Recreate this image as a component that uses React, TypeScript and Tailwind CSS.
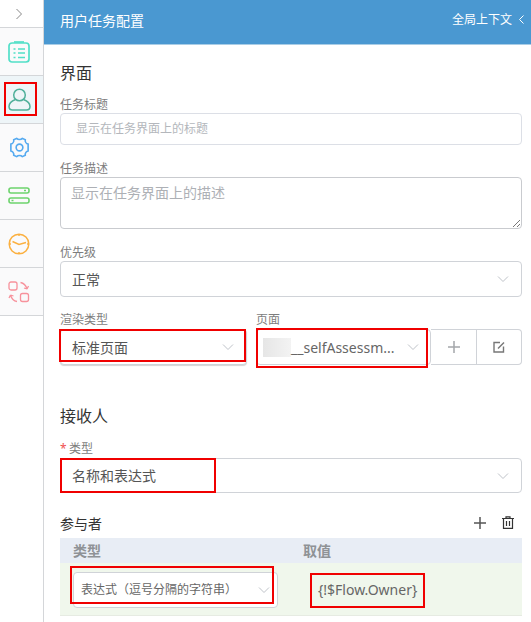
const font = "font-['Noto_Sans','Noto_Sans_CJK_SC',sans-serif]";

const Chevron = () => (
  <svg width="14" height="8" viewBox="0 0 14 8" fill="none" stroke="#bfc3c9" strokeWidth="1" className="shrink-0">
    <path d="M2 1.500 7 6.500 12 1.500" />
  </svg>
);

const ListIcon = () => (
  <svg width="22" height="22" viewBox="0 0 22 22" fill="none" stroke="#52dfc8" strokeWidth="1.7">
    <rect x="1" y="2" width="20" height="19" rx="3" />
    <path d="M6 1h10" />
    <path d="M5.500 8h2M10 8h7M5.500 12h2M10 12h7M5.500 16.500h2M10 16.500h7" />
  </svg>
);

const UserIcon = () => (
  <svg width="23" height="23" viewBox="0 0 23 23" fill="none" stroke="#4fb09a" strokeWidth="1.5">
    <circle cx="11.500" cy="7" r="5.800" />
    <path d="M7.500 11.500C3.500 13 1 15.500 1 18.500c0 2.200 1.500 3.500 3.500 3.500h14c2 0 3.500-1.300 3.500-3.500 0-3-2.500-5.500-6.500-7" />
  </svg>
);

const GearIcon = () => (
  <svg width="23" height="23" viewBox="0 0 24 24" fill="none" stroke="#55aaf0" strokeWidth="1.7">
    <path d="M9 2.500c1.500 1.500 4.500 1.500 6 0l3 1.500c-.3 2 1.200 4 3 4.500v7c-1.800.5-3.300 2.500-3 4.500l-3 1.500c-1.500-1.500-4.500-1.500-6 0l-3-1.500c.3-2-1.200-4-3-4.500v-7c1.800-.5 3.300-2.500 3-4.500z" />
    <circle cx="12" cy="12" r="3.500" />
  </svg>
);

const ServerIcon = () => (
  <svg width="22" height="17" viewBox="0 0 22 17" fill="none" stroke="#6dd36d" strokeWidth="1.6">
    <rect x="1" y="1" width="20" height="5" rx="2" />
    <rect x="1" y="11" width="20" height="5" rx="2" />
    <path d="M16 3.500h2M3.500 13.500h2" />
  </svg>
);

const ClockIcon = () => (
  <svg width="22" height="22" viewBox="0 0 22 22" fill="none" stroke="#fbb040" strokeWidth="1.5">
    <circle cx="11" cy="11" r="9.800" />
    <path d="M11 1v2M11 19v2M1 11h2M19 11h2" />
    <path d="M4.500 8.500 11 11.500 18 9.500" />
  </svg>
);

const SwapIcon = () => (
  <svg width="22" height="22" viewBox="0 0 22 22" fill="none" stroke="#f7929c" strokeWidth="1.3">
    <rect x="1" y="1" width="8" height="8" rx="2" />
    <rect x="12.500" y="12.500" width="8" height="8" rx="2" />
    <path d="M12.500 1.500c3 .5 5.500 3 6.500 6.500M19 8l-3-1M19 8l1.500-3" />
    <path d="M9 20.500c-3-.5-5.500-3-6.500-6.500M2.500 14l-1.500 3M2.500 14l3 1" />
  </svg>
);

const RailItem = ({ children, active }: { children: React.ReactNode; active?: boolean }) => (
  <div className={`relative h-[48px] pr-[5px] flex items-center justify-center border-b border-[#d4d6d9] ${active ? "bg-[#eef5f8]" : "bg-[#fafafb]"}`}>
    {children}
    {active && <div className="absolute left-[4px] top-[6px] w-[33px] h-[34px] border-[2px] border-[#f00000]" />}
  </div>
);

const Rail = () => (
  <aside className="w-[44px] shrink-0 border-r border-[#d4d6d9] h-[622px] bg-white">
    <div className="h-[28px] pr-[5px] flex items-center justify-center border-b border-[#d4d6d9]">
      <svg width="8" height="12" viewBox="0 0 8 12" fill="none" stroke="#888" strokeWidth="1">
        <path d="M1.500 1 6.500 6 1.500 11" />
      </svg>
    </div>
    <RailItem><ListIcon /></RailItem>
    <RailItem active><UserIcon /></RailItem>
    <RailItem><GearIcon /></RailItem>
    <RailItem><ServerIcon /></RailItem>
    <RailItem><ClockIcon /></RailItem>
    <RailItem><SwapIcon /></RailItem>
  </aside>
);

const Label = ({ text, className = "" }: { text: string; className?: string }) => (
  <div className={`text-[12px] leading-[16px] text-[#7d7d7d] ${className}`}>{text}</div>
);

const Select = ({ value, className = "" }: { value: React.ReactNode; className?: string }) => (
  <div className={`flex items-center justify-between pl-[11px] pr-[11px] border border-[#d0d3d8] rounded-[4px] text-[14px] text-[#555] bg-white ${className}`}>
    <span>{value}</span>
    <Chevron />
  </div>
);

const RedBox = ({ className }: { className: string }) => (
  <div className={`absolute border-[2px] border-[#f00000] pointer-events-none ${className}`} />
);

const App = () => {
  return (
    <div className={`${font} flex w-[531px] h-[622px] overflow-hidden bg-white`}>
      <Rail />
      <main className="flex-1 min-w-0">
        <header className="h-[45px] pb-[4px] bg-[#4a98d1] border-b border-[#a9cde6] flex items-center justify-between pl-[16px] pr-[7px] text-white">
          <span className="text-[14px]">用户任务配置</span>
          <span className="flex items-center gap-[7px] text-[12px]">
            全局上下文
            <svg width="5" height="9" viewBox="0 0 5 9" fill="none" stroke="#fff" strokeWidth="1" className="mb-[2px]">
              <path d="M4.500 .5 .5 4.500 4.500 8.500" />
            </svg>
          </span>
        </header>

        <div className="pl-[16px] pr-[9px]">
          <h2 className="mt-[16px] text-[16px] leading-[24px] text-[#333] font-normal">界面</h2>

          <Label text="任务标题" className="mt-[12px]" />
          <div className="h-[32px] flex items-center pl-[15px] border border-[#dcdfe6] rounded-[4px] text-[12px] text-[#b4b7bc]">
            显示在任务界面上的标题
          </div>

          <Label text="任务描述" className="mt-[16px]" />
          <div className="relative h-[52px] pl-[10px] pt-[5px] border border-[#c9cbcf] rounded-[4px] text-[14px] leading-[20px] text-[#adb0b5]">
            显示在任务界面上的描述
            <svg width="9" height="9" viewBox="0 0 9 9" stroke="#555" strokeWidth="0.8" className="absolute right-0 bottom-0">
              <path d="M1 8 8 1M5 8 8 5" />
            </svg>
          </div>

          <Label text="优先级" className="mt-[16px]" />
          <Select value="正常" className="h-[36px]" />

          <div className="mt-[15px] flex">
            <div className="relative w-[187px] mr-[9px]">
              <Label text="渲染类型" />
              <Select value="标准页面" className="h-[36px] mt-[1px] shadow-[0_1px_1px_#d5d5d5]" />
              <RedBox className="left-[-1px] top-[17px] w-[187px] h-[33px]" />
            </div>
            <div className="relative flex-1">
              <Label text="页面" />
              <div className="mt-[1px] flex">
                <div className="w-[175px] h-[36px] flex items-center justify-between pl-[6px] pr-[10px] border border-[#d0d3d8] rounded-[4px] text-[14px] text-[#666]">
                  <span className="flex items-center">
                    <span className="w-[28px] h-[19px] bg-gradient-to-r from-[#e6e6e6] to-[#f3f3f3]" />
                    __selfAssessm...
                  </span>
                  <Chevron />
                </div>
                <div className="w-[46px] h-[36px] flex items-center justify-center border-y border-r border-[#d0d3d8]">
                  <svg width="12" height="12" viewBox="0 0 12 12" stroke="#a4a7ab" strokeWidth="1.5">
                    <path d="M6 0v12M0 6h12" />
                  </svg>
                </div>
                <div className="w-[45px] h-[36px] flex items-center justify-center border-y border-r border-[#d0d3d8] rounded-r-[4px]">
                  <svg width="12" height="12" viewBox="0 0 12 12" fill="none" stroke="#777" strokeWidth="1.4">
                    <path d="M7 1.500H1v9.500h9.500V5.500" />
                    <path d="M5 7.500 11 1.500" />
                  </svg>
                </div>
              </div>
              <RedBox className="left-0 top-[16px] w-[172px] h-[40px]" />
            </div>
          </div>

          <h2 className="mt-[39px] text-[16px] leading-[24px] text-[#333] font-normal">接收人</h2>

          <div className="mt-[13px] flex items-center gap-[2px] text-[12px] leading-[16px] text-[#7d7d7d]">
            <span className="text-[#f05050] w-[7px]">*</span>
            类型
          </div>
          <div className="relative mt-[1px]">
            <Select value="名称和表达式" className="h-[35px]" />
            <RedBox className="left-0 top-0 w-[156px] h-[35px]" />
          </div>

          <div className="mt-[21px] h-[24px] flex items-start justify-between pr-[8px]">
            <span className="text-[14px] leading-[20px] text-[#333]">参与者</span>
            <div className="flex items-center gap-[16px] mt-[2px]">
              <svg width="12" height="12" viewBox="0 0 12 12" stroke="#555" strokeWidth="1.5">
                <path d="M6 0v12M0 6h12" />
              </svg>
              <svg width="12" height="13" viewBox="0 0 12 13" fill="none" stroke="#333" strokeWidth="1.2">
                <path d="M0 2.500h12M4 2.500V.8h4v1.700M1.500 2.500V12.400h9V2.500M4.500 5v5M7.500 5v5" />
              </svg>
            </div>
          </div>

          <div className="h-[25px] bg-[#e8edf5] flex items-center text-[14px] font-bold text-[#8f9296]">
            <span className="w-[243px] pl-[13px]">类型</span>
            <span>取值</span>
          </div>
          <div className="relative h-[53px] bg-[#f0f7ec] flex items-center border-b border-[#e6ebe2]">
            <div className="ml-[13px] mt-[1px] w-[205px] h-[36px] flex items-center justify-between pl-[7px] pr-[6px] border border-[#d0d3d8] rounded-[4px] bg-white text-[12px] text-[#666]">
              <span>表达式（逗号分隔的字符串）</span>
              <Chevron />
            </div>
            <span className="ml-[40px] text-[14px] text-[#666]">{"{!$Flow.Owner}"}</span>
            <RedBox className="left-[10px] top-[3px] w-[204px] h-[38px]" />
            <RedBox className="left-[250px] top-[10px] w-[115px] h-[35px]" />
          </div>
        </div>
      </main>
    </div>
  );
};

export default App;
